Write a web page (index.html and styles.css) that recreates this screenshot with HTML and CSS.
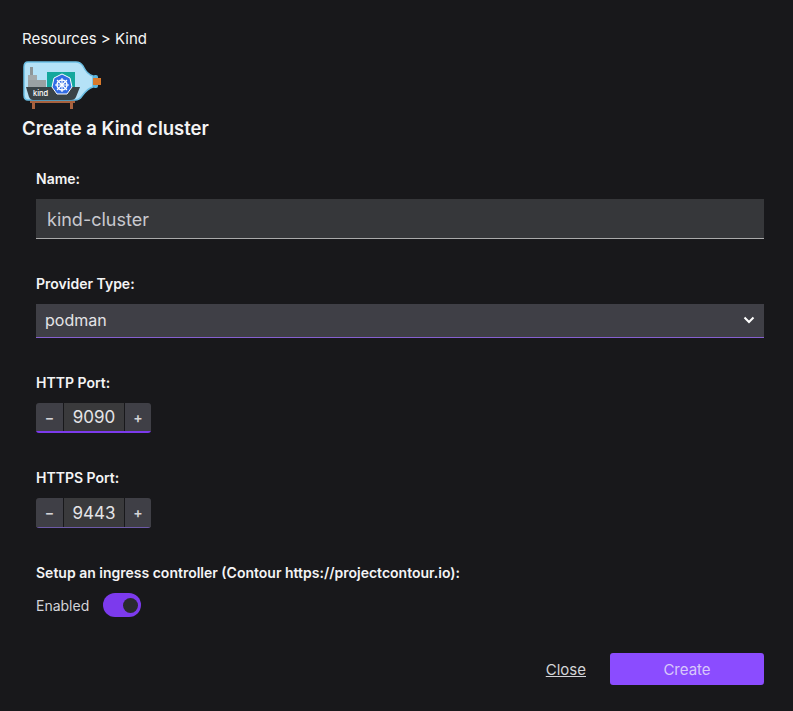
FILE: index.html
```html
<!DOCTYPE html>
<html>

<head>
	<meta name="viewport" content="width=device-width, initial-scale=1" />
	<title>Create a Kind cluster</title>
	<link rel="stylesheet" href="styles.css">
</head>

<body>
	<div class="crumb">Resources &gt; Kind</div>
	<svg class="logo" width="80" height="50" viewBox="0 0 80 50">
		<!-- bottle origin is x=22 y=60 on the page -->
		<path d="M6 2H54C57 2 59 3 61 6C63 10 66 15 71 16V27C66 28 63 32 60 36C58 39 56 40 53 40H6C3 40 2 38 2 35V7C2 4 3 2 6 2Z" fill="#b5e2f7" stroke="#6cc0e6" stroke-width="1.500"/>
		<rect x="71" y="15" width="5" height="13" rx="2" fill="#5ab5de"/>
		<rect x="71" y="18" width="8" height="7" fill="#d9792b"/>
		<rect x="8" y="7" width="3" height="9" fill="#8d9598"/>
		<rect x="6" y="15" width="9" height="6" fill="#a3a9ab"/>
		<rect x="6" y="20" width="18" height="8" fill="#9aa1a3"/>
		<rect x="25" y="12" width="28" height="16" fill="#14a79d"/>
		<path d="M4 27H58L54 37C53 39 52 40 49 40H11C9 40 8 39 7 37Z" fill="#3a4347"/>
		<path d="M40 14L48 18L50 27L45 34H35L30 27L32 18Z" fill="#326ce5" stroke="#fff" stroke-width="1"/>
		<circle cx="40" cy="25" r="5" fill="none" stroke="#fff" stroke-width="1.400"/>
		<path d="M40 18V32M33 25H47M35 20L45 30M45 20L35 30" stroke="#fff" stroke-width="1.100"/>
		<path d="M10 49V43H8V41H53V43H51V49H48V43H13V49Z" fill="#a8623f"/>
		<text x="11" y="36" class="logo-text">kind</text>
	</svg>
	<h1 class="title">Create a Kind cluster</h1>

	<form class="form">
		<div class="field name-field">
			<label class="lbl">Name:</label>
			<input class="text-input" type="text" value="kind-cluster" />
		</div>

		<div class="field provider-field">
			<label class="lbl">Provider Type:</label>
			<div class="select-box">
				<span>podman</span>
				<svg width="12" height="8" viewBox="0 0 12 8"><path d="M1.500 1.500L6 6L10.500 1.500" fill="none" stroke="#fff" stroke-width="2"/></svg>
			</div>
		</div>

		<div class="field port-field">
			<label class="lbl">HTTP Port:</label>
			<div class="number-box focused">
				<span class="step">−</span>
				<span class="num">9090</span>
				<span class="step">+</span>
			</div>
		</div>

		<div class="field port-field">
			<label class="lbl">HTTPS Port:</label>
			<div class="number-box">
				<span class="step">−</span>
				<span class="num">9443</span>
				<span class="step">+</span>
			</div>
		</div>

		<div class="field ingress-field">
			<label class="lbl">Setup an ingress controller (Contour https://projectcontour.io):</label>
			<div class="toggle-row">
				<span>Enabled</span>
				<span class="toggle"><span class="knob"></span></span>
			</div>
		</div>

		<div class="actions">
			<a class="close" href="#">Close</a>
			<button class="create" type="button">Create</button>
		</div>
	</form>
</body>

</html>
```
FILE: styles.css
```css
body {
	margin:0;
	padding:29px 29px 0 22px;
	background-color:#18181b;
	color:#e4e4e7;
	font-family:"Inter","Open Sans",sans-serif;
	font-size:14px;
}

.crumb {
	font-size:15px;
	line-height:19px;
	color:#f4f4f5;
}

.logo {
	display:block;
	margin-top:12px;
}

.logo-text {
	font-size:7.500px;
	font-weight:500;
	fill:#fff;
}

.title {
	margin:7px 0 0;
	font-size:18.500px;
	line-height:22px;
	font-weight:600;
	color:#f4f4f5;
}

.form {
	padding:32px 0 0 14px;
}

.lbl {
	display:block;
	font-size:14px;
	line-height:16px;
	font-weight:600;
	color:#f4f4f5;
	margin-bottom:12px;
}

.field {
	margin-bottom:37px;
}

.text-input {
	display:block;
	box-sizing:border-box;
	width:100%;
	height:40px;
	padding:2px 11px 0;
	border:0;
	border-bottom:1px solid #aaa;
	background-color:#36373a;
	color:#c9c9cf;
	font-family:inherit;
	font-size:18px;
}

.select-box {
	display:flex;
	align-items:center;
	justify-content:space-between;
	box-sizing:border-box;
	height:34px;
	padding:0 9px 2px;
	border-bottom:1px solid #8660d0;
	background-color:#3f3f46;
	font-size:16px;
	color:#e4e4e7;
}

.number-box {
	display:inline-flex;
	box-sizing:border-box;
	height:30px;
	border-bottom:1px solid #6d5aa8;
	border-radius:3px;
	background-color:#18181b;
	gap:1px;
}

.number-box.focused {
	border-bottom:2px solid #7c3aed;
}

.step {
	display:flex;
	align-items:center;
	justify-content:center;
	width:27px;
	background-color:#3f3f46;
	color:#d4d4d8;
	font-size:14px;
	font-weight:600;
}

.step:first-child {
	border-top-left-radius:3px;
}

.step:last-child {
	width:26px;
	border-top-right-radius:3px;
}

.num {
	display:flex;
	align-items:center;
	justify-content:center;
	width:60px;
	background-color:#3a3a3c;
	color:#e4e4e7;
	font-size:17px;
}

.ingress-field {
	margin-bottom:0;
}

.toggle-row {
	display:flex;
	align-items:center;
	gap:14px;
	color:#d4d4d8;
}

.toggle {
	display:flex;
	align-items:center;
	justify-content:flex-end;
	width:38px;
	height:24px;
	padding:0 3px;
	box-sizing:border-box;
	border-radius:12px;
	background-color:#7c3aed;
}

.knob {
	width:15px;
	height:15px;
	border-radius:50%;
	background-color:#2a2a2e;
}

.actions {
	display:flex;
	justify-content:flex-end;
	align-items:center;
	gap:24px;
	margin-top:36px;
}

.close {
	color:#d4d4d8;
	font-size:15px;
}

.create {
	width:154px;
	height:32px;
	border:0;
	border-radius:3px;
	background-color:#8b4cff;
	color:#d8c8fa;
	font-family:inherit;
	font-size:15px;
}
```
